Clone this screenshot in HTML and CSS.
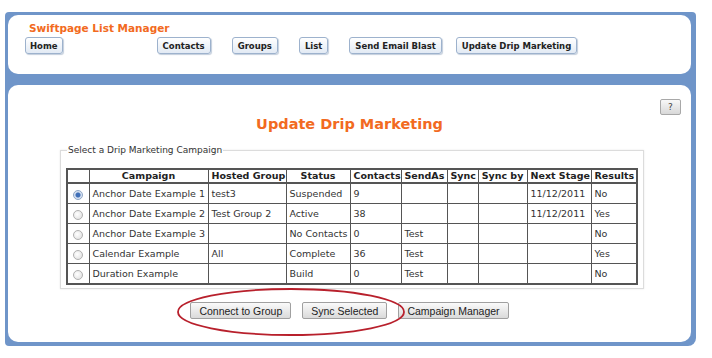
FILE: index.html
```html
<!DOCTYPE html>
<html>
<head>
<meta charset="utf-8">
<link rel="stylesheet" href="styles.css">
</head>
<body>
<div class="frame">
  <div class="panel top">
    <div class="app-title">Swiftpage List Manager</div>
    <nav class="nav">
      <button class="nav-btn home">Home</button>
      <button class="nav-btn">Contacts</button>
      <button class="nav-btn">Groups</button>
      <button class="nav-btn">List</button>
      <button class="nav-btn">Send Email Blast</button>
      <button class="nav-btn last">Update Drip Marketing</button>
    </nav>
  </div>
  <div class="panel main">
    <div class="help-row"><button class="help-btn">?</button></div>
    <h1 class="page-title">Update Drip Marketing</h1>
    <fieldset class="box">
      <legend>Select a Drip Marketing Campaign</legend>
      <table class="grid">
        <colgroup>
          <col class="c-radio"><col class="c-camp"><col class="c-group"><col class="c-status"><col class="c-contacts"><col class="c-sendas"><col class="c-sync"><col class="c-syncby"><col class="c-next"><col class="c-results">
        </colgroup>
        <thead>
          <tr><th></th><th>Campaign</th><th>Hosted Group</th><th>Status</th><th>Contacts</th><th>SendAs</th><th>Sync</th><th>Sync by</th><th>Next Stage</th><th>Results</th></tr>
        </thead>
        <tbody>
          <tr><td class="rc"><span class="radio on"></span></td><td>Anchor Date Example 1</td><td>test3</td><td>Suspended</td><td>9</td><td></td><td></td><td></td><td>11/12/2011</td><td>No</td></tr>
          <tr><td class="rc"><span class="radio"></span></td><td>Anchor Date Example 2</td><td>Test Group 2</td><td>Active</td><td>38</td><td></td><td></td><td></td><td>11/12/2011</td><td>Yes</td></tr>
          <tr><td class="rc"><span class="radio"></span></td><td>Anchor Date Example 3</td><td></td><td>No Contacts</td><td>0</td><td>Test</td><td></td><td></td><td></td><td>No</td></tr>
          <tr><td class="rc"><span class="radio"></span></td><td>Calendar Example</td><td>All</td><td>Complete</td><td>36</td><td>Test</td><td></td><td></td><td></td><td>Yes</td></tr>
          <tr><td class="rc"><span class="radio"></span></td><td>Duration Example</td><td></td><td>Build</td><td>0</td><td>Test</td><td></td><td></td><td></td><td>No</td></tr>
        </tbody>
      </table>
    </fieldset>
    <div class="actions">
      <button class="act-btn">Connect to Group</button>
      <button class="act-btn">Sync Selected</button>
      <button class="act-btn">Campaign Manager</button>
    </div>
    <svg class="annot" width="232" height="52" viewBox="0 0 232 52"><ellipse cx="116" cy="26" rx="113" ry="23" fill="none" stroke="#b8202c" stroke-width="1.8"/></svg>
  </div>
</div>
</body>
</html>
```
FILE: styles.css
```css
html, body { margin: 0; padding: 0; background: #fff; }
body { font-family: "DejaVu Sans", Verdana, sans-serif; color: #333; }

.frame {
  margin: 12px 14px 12px 5px;
  width: 683px;
  background: #6f95c9;
  padding: 3px 5px 4px 3px;
  border-radius: 4px 4px 8px 4px;
  display: flex;
  flex-direction: column;
  gap: 11px;
}
.panel { background: #fff; border-radius: 10px; }
.top { height: 59px; box-sizing: border-box; padding: 7px 0 0 17px; }
.app-title {
  color: #f26a21;
  font-weight: bold;
  font-size: 10.5px;
  margin-left: 4px;
  line-height: 13px;
}
.nav { display: flex; gap: 21px; margin-top: 2px; }
.nav-btn {
  font-family: "DejaVu Sans", Verdana, sans-serif;
  font-weight: bold;
  font-size: 8.5px;
  color: #222;
  height: 17px;
  padding: 0 5px;
  background: linear-gradient(#ffffff, #e2eaf4);
  border: 1px solid #9db2cd;
  border-radius: 3px;
  box-shadow: 1px 1px 1px #c3cedc;
}
.nav-btn.home { margin-right: 73px; padding: 0 4px; }
.nav-btn.last { margin-left: -7px; }

.main { position: relative; height: 257px; box-sizing: border-box; padding-top: 14px; }
.help-row { display: flex; justify-content: flex-end; padding-right: 10px; height: 16px; }
.help-btn {
  width: 21px; height: 16px; padding: 0;
  font-size: 9px; color: #444;
  font-family: "DejaVu Sans", sans-serif;
  background: linear-gradient(#f8f8f8, #d8d8d8);
  border: 1px solid #a8a8a8; border-radius: 2px;
}
.page-title {
  margin: 0;
  text-align: center;
  color: #f26a21;
  font-size: 14.5px;
  line-height: 18px;
  height: 18px;
  font-weight: bold;
}
.box {
  margin: 12px 51px 0 52px;
  padding: 13px 5px 3px 5px;
  border: 1px solid #dcdcdc;
  box-shadow: 0 0 2px #e8e8e8;
}
.box legend { font-size: 9px; color: #333; padding: 0 1px; margin-left: 1px; }
.grid {
  width: 571px;
  table-layout: fixed;
  border-collapse: collapse;
  border: 2px solid #555;
  font-size: 9.5px;
  color: #333;
}
.grid th, .grid td { border: 1px solid #555; padding: 0 3px; white-space: nowrap; overflow: hidden; }
.grid th { height: 12px; font-weight: bold; color: #222; text-align: center; line-height: 12px; border-bottom-width: 2px; }
.grid td { height: 19px; line-height: 19px; }
.grid td.rc { text-align: center; padding: 0; }
.c-radio { width: 22px; } .c-camp { width: 119px; } .c-group { width: 78px; } .c-status { width: 64px; }
.c-contacts { width: 51px; } .c-sendas { width: 46px; } .c-sync { width: 31px; } .c-syncby { width: 49px; }
.c-next { width: 64px; } .c-results { width: 46px; }
.radio {
  display: inline-block; vertical-align: middle;
  width: 8px; height: 8px; border-radius: 50%;
  border: 1px solid #b0b0b0;
  background: radial-gradient(circle at 40% 40%, #fff, #dcdcdc);
}
.radio.on { background: radial-gradient(circle, #3f6fb8 0 2px, #cfdcef 3px, #e8eef7 5px); border-color: #8fa6c6; }

.actions { display: flex; justify-content: center; gap: 11px; margin-top: 13px; }
.act-btn {
  font-family: "Liberation Sans", Arial, sans-serif;
  font-size: 10.5px;
  color: #222;
  height: 17px;
  padding: 0 8px;
  background: linear-gradient(#fafafa, #dadada);
  border: 1px solid #a0a0a0;
  border-radius: 2px;
}
.annot { position: absolute; left: 167px; top: 201px; }
```
